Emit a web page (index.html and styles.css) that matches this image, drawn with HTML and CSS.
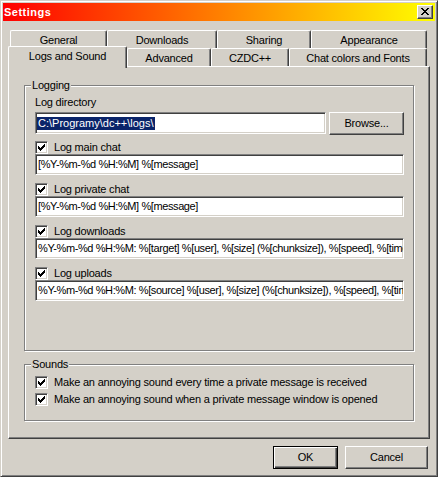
FILE: index.html
```html
<!DOCTYPE html>
<html>
<head>
<meta charset="utf-8">
<title>Settings</title>
<link rel="stylesheet" href="styles.css">
</head>
<body>
<div class="window">
  <div class="titlebar">
    <span class="title">Settings</span>
    <span class="close"><svg width="8" height="7" viewBox="0 0 8 7" shape-rendering="crispEdges"><path d="M0 0h2v1H0z M6 0h2v1H6z M1 1h2v1H1z M5 1h2v1H5z M2 2h4v1H2z M3 3h2v1H3z M2 4h4v1H2z M1 5h2v1H1z M5 5h2v1H5z M0 6h2v1H0z M6 6h2v1H6z" fill="#000"/></svg></span>
  </div>
  <div class="client">
    <div class="tabrow back">
      <div class="tab w-general">General</div>
      <div class="tab w-downloads">Downloads</div>
      <div class="tab w-sharing">Sharing</div>
      <div class="tab w-appearance">Appearance</div>
    </div>
    <div class="tabrow front">
      <div class="tab sel w-logs">Logs and Sound</div>
      <div class="tab w-advanced">Advanced</div>
      <div class="tab w-czdc">CZDC++</div>
      <div class="tab w-chat">Chat colors and Fonts</div>
    </div>
    <div class="panel">
      <div class="group logging">
        <div class="legend">Logging</div>
        <div class="label">Log directory</div>
        <div class="dirrow">
          <div class="input dir"><span class="hl">C:\Programy\dc++\logs\</span></div>
          <div class="button browse">Browse...</div>
        </div>
        <div class="entry first">
          <div class="check"><span class="cb"><svg width="11" height="11" viewBox="0 0 11 11" shape-rendering="crispEdges"><path d="M2 4h1v3H2z M3 5h1v3H3z M4 6h1v3H4z M5 5h1v3H5z M6 4h1v3H6z M7 3h1v3H7z M8 2h1v3H8z" fill="#000"/></svg></span>Log main chat</div>
          <div class="input">[%Y-%m-%d %H:%M] %[message]</div>
        </div>
        <div class="entry">
          <div class="check"><span class="cb"><svg width="11" height="11" viewBox="0 0 11 11" shape-rendering="crispEdges"><path d="M2 4h1v3H2z M3 5h1v3H3z M4 6h1v3H4z M5 5h1v3H5z M6 4h1v3H6z M7 3h1v3H7z M8 2h1v3H8z" fill="#000"/></svg></span>Log private chat</div>
          <div class="input">[%Y-%m-%d %H:%M] %[message]</div>
        </div>
        <div class="entry">
          <div class="check"><span class="cb"><svg width="11" height="11" viewBox="0 0 11 11" shape-rendering="crispEdges"><path d="M2 4h1v3H2z M3 5h1v3H3z M4 6h1v3H4z M5 5h1v3H5z M6 4h1v3H6z M7 3h1v3H7z M8 2h1v3H8z" fill="#000"/></svg></span>Log downloads</div>
          <div class="input">%Y-%m-%d %H:%M: %[target] %[user], %[size] (%[chunksize]), %[speed], %[time]</div>
        </div>
        <div class="entry">
          <div class="check"><span class="cb"><svg width="11" height="11" viewBox="0 0 11 11" shape-rendering="crispEdges"><path d="M2 4h1v3H2z M3 5h1v3H3z M4 6h1v3H4z M5 5h1v3H5z M6 4h1v3H6z M7 3h1v3H7z M8 2h1v3H8z" fill="#000"/></svg></span>Log uploads</div>
          <div class="input">%Y-%m-%d %H:%M: %[source] %[user], %[size] (%[chunksize]), %[speed], %[time]</div>
        </div>
      </div>
      <div class="group sounds">
        <div class="legend">Sounds</div>
        <div class="soundlist">
          <div class="check srow"><span class="cb"><svg width="11" height="11" viewBox="0 0 11 11" shape-rendering="crispEdges"><path d="M2 4h1v3H2z M3 5h1v3H3z M4 6h1v3H4z M5 5h1v3H5z M6 4h1v3H6z M7 3h1v3H7z M8 2h1v3H8z" fill="#000"/></svg></span>Make an annoying sound every time a private message is received</div>
          <div class="check srow"><span class="cb"><svg width="11" height="11" viewBox="0 0 11 11" shape-rendering="crispEdges"><path d="M2 4h1v3H2z M3 5h1v3H3z M4 6h1v3H4z M5 5h1v3H5z M6 4h1v3H6z M7 3h1v3H7z M8 2h1v3H8z" fill="#000"/></svg></span>Make an annoying sound when a private message window is opened</div>
        </div>
      </div>
    </div>
    <div class="buttons">
      <div class="button default ok">OK</div>
      <div class="button cancel">Cancel</div>
    </div>
  </div>
</div>
</body>
</html>
```
FILE: styles.css
```css
* { box-sizing: border-box; }
html, body { margin: 0; padding: 0; }
body {
  width: 438px;
  height: 477px;
  overflow: hidden;
  background: #d4d0c8;
  font-family: "Liberation Sans", Arial, sans-serif;
  font-size: 11px;
  line-height: 13px;
  letter-spacing: -0.2px;
  color: #000;
}
.window {
  width: 438px;
  height: 477px;
  background: #d4d0c8;
  border: 1px solid;
  border-color: #d4d0c8 #404040 #404040 #d4d0c8;
  box-shadow: inset 1px 1px 0 #fff, inset -1px -1px 0 #808080;
  padding: 2px;
  display: flex;
  flex-direction: column;
}
.titlebar {
  height: 18px;
  flex: none;
  background: linear-gradient(to right, #ff0000, #ffff00);
  display: flex;
  align-items: center;
  justify-content: space-between;
  padding: 0 2px 0 1px;
}
.title {
  color: #fff;
  font-weight: bold;
  letter-spacing: 0.5px;
}
.close {
  width: 16px;
  height: 14px;
  background: #d4d0c8;
  border: 1px solid;
  border-color: #fff #404040 #404040 #fff;
  box-shadow: inset -1px -1px 0 #808080;
  padding: 2px 0 0 3px;
  display: flex;
  align-items: flex-start;
}
.close svg { display: block; }
.client {
  flex: 1;
  display: flex;
  flex-direction: column;
  padding: 9px 5px 0 5px;
}
.tabrow { display: flex; }
.back {
  height: 18px;
  margin-left: 2px;
  margin-bottom: -2px;
}
.front {
  height: 20px;
  align-items: flex-end;
  position: relative;
  z-index: 1;
}
.tab {
  height: 18px;
  flex: none;
  display: flex;
  align-items: center;
  justify-content: center;
  padding-top: 1px;
  background: #d4d0c8;
  border-top: 1px solid #fff;
  border-left: 1px solid #fff;
  border-right: 1px solid #404040;
  box-shadow: inset -1px 0 0 #808080;
  border-radius: 2px 2px 0 0;
  white-space: nowrap;
}
.tab.sel {
  height: 22px;
  margin-bottom: -2px;
  padding-top: 0;
  padding-bottom: 2px;
}
.w-general { width: 97px; }
.w-downloads { width: 110px; }
.w-sharing { width: 94px; }
.w-appearance { width: 116px; }
.w-logs { width: 119px; }
.w-advanced { width: 84px; }
.w-czdc { width: 78px; }
.w-chat { width: 138px; }
.panel {
  height: 373px;
  flex: none;
  border: 1px solid;
  border-color: #fff #404040 #404040 #fff;
  box-shadow: inset -1px -1px 0 #808080;
  padding: 18px 15px 0 15px;
}
.group {
  border: 1px solid #808080;
  box-shadow: 1px 1px 0 #fff, inset 1px 1px 0 #fff;
  padding: 0 9px 0 10px;
}
.logging { height: 266px; }
.sounds { height: 57px; margin-top: 13px; }
.legend {
  display: table;
  margin: -7px 0 0 -4px;
  padding: 0 1px;
  background: #d4d0c8;
}
.label {
  margin-top: 4px;
  height: 13px;
}
.dirrow {
  display: flex;
  gap: 3px;
  margin-top: 3px;
  height: 23px;
}
.input {
  height: 21px;
  background: #fff;
  border: 1px solid;
  border-color: #808080 #fff #fff #808080;
  box-shadow: inset 1px 1px 0 #404040, inset -1px -1px 0 #d4d0c8;
  padding: 0 0 0 2px;
  display: flex;
  align-items: center;
  white-space: nowrap;
  overflow: hidden;
  letter-spacing: -0.4px;
}
.input.dir {
  flex: 1;
  height: 22px;
  padding-left: 1px;
}
.hl {
  background: #0a246a;
  color: #fff;
  padding: 0 1px 0 1px;
  letter-spacing: 0;
}
.button {
  height: 23px;
  display: flex;
  align-items: center;
  justify-content: center;
  background: #d4d0c8;
  border: 1px solid;
  border-color: #fff #404040 #404040 #fff;
  box-shadow: inset -1px -1px 0 #808080;
}
.browse { width: 75px; flex: none; }
.entry { margin-top: 7px; }
.entry.first { margin-top: 5px; }
.check {
  display: flex;
  align-items: center;
  height: 14px;
  white-space: nowrap;
}
.cb {
  width: 13px;
  height: 13px;
  flex: none;
  margin-right: 6px;
  background: #fff;
  border: 1px solid;
  border-color: #808080 #fff #fff #808080;
  box-shadow: inset 1px 1px 0 #404040, inset -1px -1px 0 #d4d0c8;
}
.cb svg { display: block; }
.soundlist { margin-top: 3px; }
.srow { height: 17px; }
.buttons {
  display: flex;
  justify-content: flex-end;
  gap: 7px;
  margin-top: 7px;
  padding-right: 2px;
}
.ok { width: 65px; }
.cancel { width: 83px; }
.button.default {
  border: 1px solid #000;
  box-shadow: inset 1px 1px 0 #fff, inset -1px -1px 0 #404040, inset -2px -2px 0 #808080;
}
```
